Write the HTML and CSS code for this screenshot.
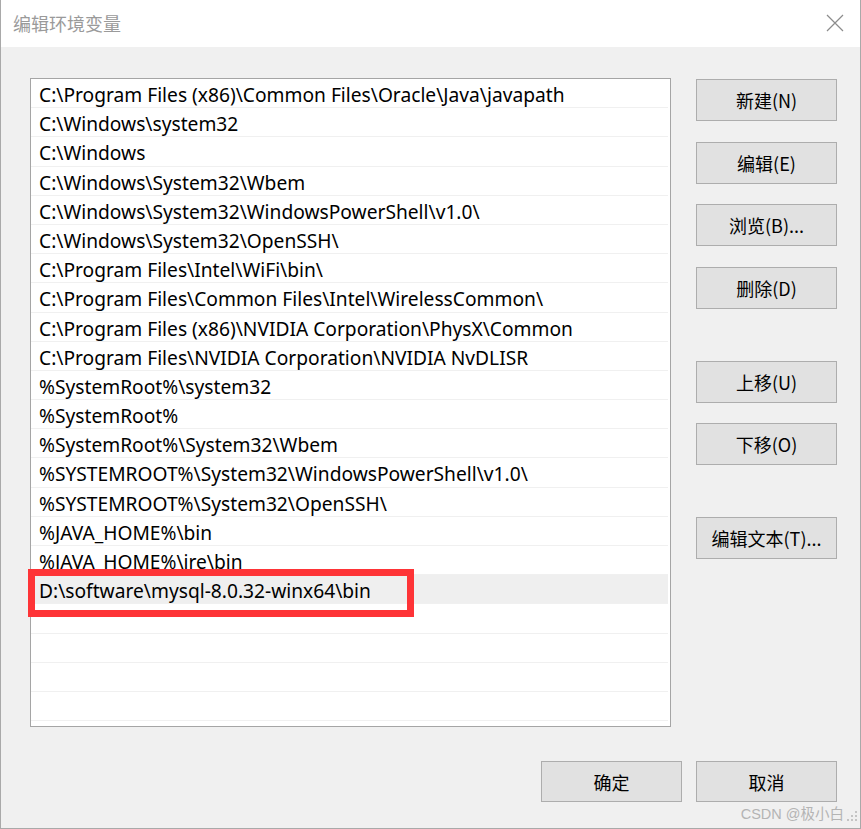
FILE: index.html
```html
<!DOCTYPE html>
<html lang="zh-CN">

<head>
  <meta charset="UTF-8">
  <meta name="viewport" content="width=device-width, initial-scale=1.0">
  <title>编辑环境变量</title>
  <link rel="stylesheet" href="styles.css">
</head>

<body>
  <div class="window">
    <div class="titlebar">
      <span class="title">编辑环境变量</span>
      <svg class="close" width="18" height="18" viewBox="0 0 18 18">
        <path d="M1 1 L17 17 M17 1 L1 17" stroke="#8c8c8c" stroke-width="1.2" fill="none" />
      </svg>
    </div>

    <div class="content">
      <div class="main">
        <div class="list">
          <div class="row">C:\Program Files (x86)\Common Files\Oracle\Java\javapath</div>
          <div class="row">C:\Windows\system32</div>
          <div class="row">C:\Windows</div>
          <div class="row">C:\Windows\System32\Wbem</div>
          <div class="row">C:\Windows\System32\WindowsPowerShell\v1.0\</div>
          <div class="row">C:\Windows\System32\OpenSSH\</div>
          <div class="row">C:\Program Files\Intel\WiFi\bin\</div>
          <div class="row">C:\Program Files\Common Files\Intel\WirelessCommon\</div>
          <div class="row">C:\Program Files (x86)\NVIDIA Corporation\PhysX\Common</div>
          <div class="row">C:\Program Files\NVIDIA Corporation\NVIDIA NvDLISR</div>
          <div class="row">%SystemRoot%\system32</div>
          <div class="row">%SystemRoot%</div>
          <div class="row">%SystemRoot%\System32\Wbem</div>
          <div class="row">%SYSTEMROOT%\System32\WindowsPowerShell\v1.0\</div>
          <div class="row">%SYSTEMROOT%\System32\OpenSSH\</div>
          <div class="row">%JAVA_HOME%\bin</div>
          <div class="row">%JAVA_HOME%\jre\bin</div>
          <div class="row selected">D:\software\mysql-8.0.32-winx64\bin</div>
          <div class="row"></div>
          <div class="row"></div>
          <div class="row"></div>
          <div class="row"></div>
          <div class="mark"></div>
        </div>

        <div class="side">
          <div class="group">
            <button class="btn">新建(N)</button>
            <button class="btn">编辑(E)</button>
            <button class="btn">浏览(B)...</button>
            <button class="btn">删除(D)</button>
          </div>
          <div class="group">
            <button class="btn">上移(U)</button>
            <button class="btn">下移(O)</button>
          </div>
          <div class="group">
            <button class="btn">编辑文本(T)...</button>
          </div>
        </div>
      </div>

      <div class="footer">
        <button class="btn">确定</button>
        <button class="btn">取消</button>
      </div>
    </div>

    <span class="watermark">CSDN @极小白</span>
    <svg class="grip" width="11" height="11" viewBox="0 0 11 11">
      <rect x="8" y="0" width="2" height="2" fill="#c4c4c4" />
      <rect x="4" y="4" width="2" height="2" fill="#c4c4c4" />
      <rect x="8" y="4" width="2" height="2" fill="#c4c4c4" />
      <rect x="0" y="8" width="2" height="2" fill="#c4c4c4" />
      <rect x="4" y="8" width="2" height="2" fill="#c4c4c4" />
      <rect x="8" y="8" width="2" height="2" fill="#c4c4c4" />
    </svg>
  </div>
</body>

</html>
```

FILE: styles.css
```css
body {
  margin: 0;
  background-color: #ffffff;
  font-family: "Noto Sans", "Noto Sans CJK SC", sans-serif;
}

.window {
  position: relative;
  width: 861px;
  height: 829px;
  box-sizing: border-box;
  border-left: 1px solid #a9a9a9;
  border-right: 1px solid #a9a9a9;
  border-bottom: 1px solid #a9a9a9;
  background-color: #f0f0f0;
  overflow: hidden;
}

.titlebar {
  height: 47px;
  background-color: #ffffff;
  display: flex;
  align-items: center;
  justify-content: space-between;
  padding: 0 16px 0 12px;
}

.title {
  font-family: "Noto Sans CJK SC", sans-serif;
  font-size: 18px;
  color: #9a9a9a;
  margin-top: -2px;
}

.close {
  margin-top: -2px;
}

.content {
  padding: 31px 23px 0 29px;
}

.main {
  display: flex;
  gap: 25px;
}

.list {
  position: relative;
  width: 641px;
  height: 649px;
  box-sizing: border-box;
  border: 1px solid #a5a5a5;
  background-color: #ffffff;
  padding-right: 2px;
}

.row {
  height: 29.2px;
  box-sizing: border-box;
  border-bottom: 1px solid #f0f0f0;
  padding-left: 8px;
  padding-top: 2px;
  font-size: 19.2px;
  line-height: 27px;
  color: #000000;
  white-space: nowrap;
}

.row.selected {
  background-color: #efefef;
}

.mark {
  position: absolute;
  left: -3px;
  top: 490px;
  width: 386px;
  height: 48px;
  box-sizing: border-box;
  border: 7px solid #fe3437;
}

.side {
  display: flex;
  flex-direction: column;
  gap: 52px;
  padding-top: 1px;
}

.group {
  display: flex;
  flex-direction: column;
  gap: 20.5px;
}

.btn {
  width: 141px;
  height: 42px;
  background-color: #e1e1e1;
  border: 1px solid #adadad;
  border-radius: 0;
  font-family: "Noto Sans CJK SC", sans-serif;
  font-size: 18px;
  color: #000000;
  padding: 0;
}

.footer {
  display: flex;
  justify-content: flex-end;
  gap: 14px;
  margin-top: 34px;
}

.footer .btn {
  height: 41px;
}

.watermark {
  position: absolute;
  right: 16px;
  bottom: 5px;
  font-family: "Liberation Sans", "Noto Sans CJK SC", sans-serif;
  font-size: 14.5px;
  color: #b4b4b4;
}

.grip {
  position: absolute;
  right: 2px;
  bottom: 6px;
}
```
